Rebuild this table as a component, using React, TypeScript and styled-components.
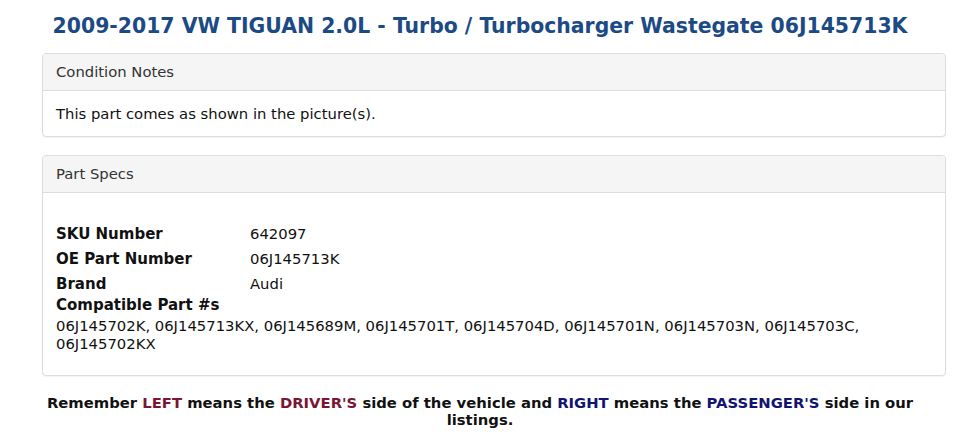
import React from 'react';
import styled, { createGlobalStyle } from 'styled-components';

const GlobalStyle = createGlobalStyle`
  body {
    margin: 0;
    background: #fff;
    font-family: "DejaVu Sans", "Liberation Sans", sans-serif;
    font-size: 14.8px;
    color: #111;
  }
`;

const Page = styled.div`
  width: 960px;
  padding-top: 12px;
`;

const Title = styled.h1`
  margin: 0 0 13px 0;
  text-align: center;
  font-size: 20.4px;
  line-height: 28px;
  font-weight: bold;
  color: #1c4a85;
`;

const Panels = styled.div`
  padding: 0 14px 0 42px;
`;

const Panel = styled.div`
  border: 1px solid #ddd;
  border-radius: 4px;
  background: #fff;
  margin-bottom: 18px;
  box-shadow: 0 1px 1px rgba(0, 0, 0, 0.05);
`;

const PanelHeading = styled.div`
  background: #f5f5f5;
  border-bottom: 1px solid #ddd;
  border-radius: 3px 3px 0 0;
  padding: 9px 13px;
  line-height: 18px;
  color: #333;
`;

const PanelBody = styled.div<{ $top?: number; $bottom?: number }>`
  padding: ${(p) => p.$top ?? 13}px 13px ${(p) => p.$bottom ?? 12}px 13px;
  line-height: 20px;
`;

const SpecTable = styled.div`
  display: grid;
  grid-template-columns: 194px 1fr;
  grid-auto-rows: 25px;
  align-items: center;
`;

const Label = styled.div`
  font-weight: bold;
  font-size: 15px;
`;

const Value = styled.div``;

const CompatLabel = styled.div`
  font-weight: bold;
  font-size: 15px;
  line-height: 18px;
`;

const CompatList = styled.div`
  margin-top: 3px;
  line-height: 18px;
`;

const Notice = styled.p`
  margin: 0;
  padding: 0 40px;
  text-align: center;
  font-weight: bold;
  font-size: 14.8px;
  line-height: 17px;
`;

const Word = styled.span<{ $tone: 'left' | 'right' }>`
  color: ${(p) => (p.$tone === 'left' ? '#7a1536' : '#121470')};
`;

const specs = [
  ['SKU Number', '642097'],
  ['OE Part Number', '06J145713K'],
  ['Brand', 'Audi'],
];

const compatible = [
  '06J145702K',
  '06J145713KX',
  '06J145689M',
  '06J145701T',
  '06J145704D',
  '06J145701N',
  '06J145703N',
  '06J145703C',
  '06J145702KX',
];

const App = () => (
  <>
    <GlobalStyle />
    <Page>
      <Title>2009-2017 VW TIGUAN 2.0L - Turbo / Turbocharger Wastegate 06J145713K</Title>
      <Panels>
        <Panel>
          <PanelHeading>Condition Notes</PanelHeading>
          <PanelBody>This part comes as shown in the picture(s).</PanelBody>
        </Panel>
        <Panel>
          <PanelHeading>Part Specs</PanelHeading>
          <PanelBody $top={28} $bottom={22}>
            <SpecTable>
              {specs.map(([label, value]) => (
                <React.Fragment key={label}>
                  <Label>{label}</Label>
                  <Value>{value}</Value>
                </React.Fragment>
              ))}
            </SpecTable>
            <CompatLabel>Compatible Part #s</CompatLabel>
            <CompatList>{compatible.join(', ')}</CompatList>
          </PanelBody>
        </Panel>
      </Panels>
      <Notice>
        Remember <Word $tone="left">LEFT</Word> means the <Word $tone="left">DRIVER'S</Word> side of the
        vehicle and <Word $tone="right">RIGHT</Word> means the <Word $tone="right">PASSENGER'S</Word> side
        in our listings.
      </Notice>
    </Page>
  </>
);

export default App;
